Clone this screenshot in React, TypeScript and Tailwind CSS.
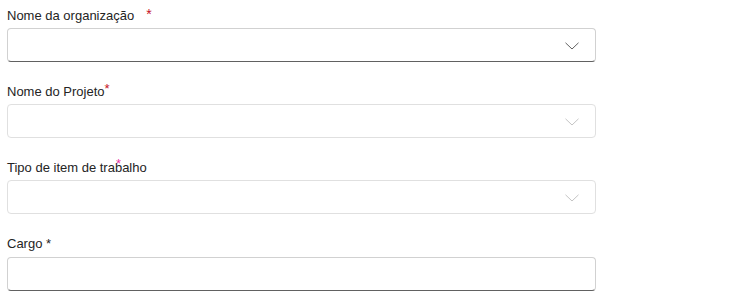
import React from "react";

const font = { fontFamily: '"Liberation Sans", Arial, sans-serif' };

function Chevron({ light }: { light?: boolean }) {
  return (
    <svg width="14" height="8" viewBox="0 0 14 8" className="absolute right-[16px] top-[13px]">
      <path d="M0.5 0.8 L7 7 L13.5 0.8" fill="none" stroke={light ? "#c4c4c4" : "#616161"} strokeWidth="1" />
    </svg>
  );
}

export default function App() {
  return (
    <div className="w-[738px] h-[299px] bg-white text-[#242424] pl-[7px] pt-[6px]" style={font}>
      <div className="w-[589px] flex flex-col">
        <div className="h-[20px] text-[13px] leading-[20px] flex">
          <span>Nome da organização</span>
          <span className="ml-[12px] mt-[1px] text-[#c50f1f] text-[14px] leading-[14px]">*</span>
        </div>
        <div className="relative mt-[2px] h-[34px] rounded-[4px] border border-[#d1d1d1] border-b-[#616161] bg-white">
          <Chevron />
        </div>

        <div className="mt-[20px] h-[20px] text-[13px] leading-[20px] flex">
          <span>Nome do Projeto</span>
          <span className="text-[#c50f1f] text-[13px] leading-[14px]">*</span>
        </div>
        <div className="relative mt-[2px] h-[34px] rounded-[4px] border border-[#e0e0e0] bg-white">
          <Chevron light />
        </div>

        <div className="relative mt-[20px] h-[20px] text-[13px] leading-[20px] flex">
          <span>Tipo de item de trabalho</span>
          <span className="absolute left-[109px] top-[-1px] text-[#e3008c] text-[13px] leading-[14px] opacity-80">*</span>
        </div>
        <div className="relative mt-[2px] h-[34px] rounded-[4px] border border-[#e0e0e0] bg-white">
          <Chevron light />
        </div>

        <div className="mt-[20px] h-[20px] text-[13px] leading-[20px] flex">
          <span>Cargo *</span>
        </div>
        <div className="relative mt-[3px] h-[34px] rounded-[4px] border border-[#d1d1d1] border-b-[#616161] bg-white" />
      </div>
    </div>
  );
}
